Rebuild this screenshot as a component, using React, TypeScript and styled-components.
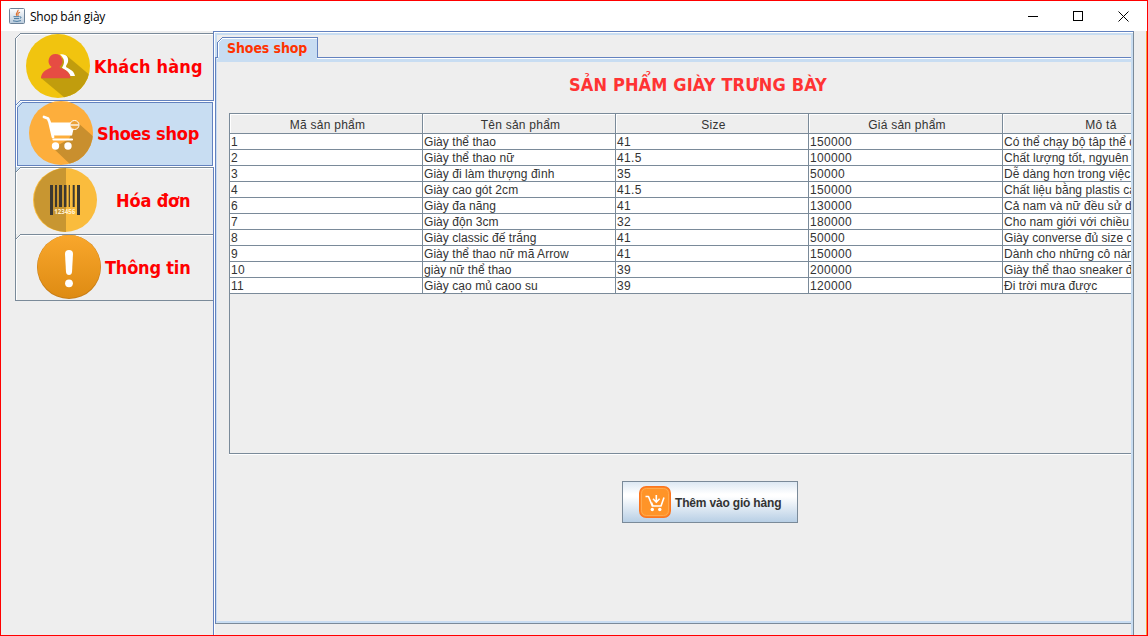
import React from 'react';
import styled, { createGlobalStyle } from 'styled-components';

const BLUE = '#6382bf';
const LIGHT = '#c8ddf2';
const SLATE = '#7a8a99';
const FACE = '#eeeeee';

const Global = createGlobalStyle`
  * { box-sizing: border-box; }
  body { margin: 0; background: ${FACE}; }
`;

const Frame = styled.div`
  width: 1148px;
  height: 636px;
  display: flex;
  flex-direction: column;
  border: 1px solid #ff0000;
  background: ${FACE};
  overflow: hidden;
  font-family: 'Liberation Sans', Arial, sans-serif;
  color: #333;
`;

const TitleBar = styled.header`
  height: 30px;
  flex: none;
  display: flex;
  align-items: center;
  padding-left: 8px;
  background: #fff;
`;

const WindowTitle = styled.div`
  flex: 1;
  padding-left: 5px;
  font: 12px 'Open Sans', 'Noto Sans', sans-serif;
  letter-spacing: -0.25px;
  color: #000;
`;

const WindowButton = styled.div`
  width: 45px;
  height: 28px;
  display: grid;
  place-items: center;
  &:last-child { width: 47px; }
`;

const Body = styled.div`
  flex: 1;
  display: flex;
  min-height: 0;
  border-right: 1px solid #f5a040;
`;

const SideTabs = styled.nav`
  width: 212px;
  flex: none;
  padding: 2px 0 0 14px;
`;

const SideTab = styled.div<{ $selected?: boolean; $inset: number }>`
  position: relative;
  height: 67px;
  display: flex;
  width: ${p => (p.$selected ? 199 : 198)}px;
  padding-left: ${p => p.$inset}px;
  border-left: 1px solid ${p => (p.$selected ? BLUE : SLATE)};
  border-top: 1px solid ${p => (p.$selected ? BLUE : SLATE)};
  box-shadow: inset 1px 1px #fff;
  background: ${p => (p.$selected ? LIGHT : FACE)};
  &:last-child { border-bottom: 1px solid ${SLATE}; }
`;

const FocusRing = styled.svg`
  position: absolute;
  left: 0;
  top: 0;
`;

const Corner = styled.svg`
  position: absolute;
  left: -1px;
  top: -1px;
`;

const SideIcon = styled.svg`
  position: relative;
  width: 64px;
  height: 64px;
  flex: none;
`;

const SideLabel = styled.span<{ $gap: number; $spacing: number }>`
  position: relative;
  padding-left: ${p => p.$gap}px;
  line-height: 66px;
  letter-spacing: ${p => p.$spacing}px;
  font-family: 'DejaVu Sans Condensed', 'DejaVu Sans', sans-serif;
  font-stretch: condensed;
  font-weight: bold;
  font-size: 18px;
  white-space: nowrap;
  color: #ff0000;
`;

const Content = styled.main`
  width: 921px;
  flex: none;
  border: 1px solid ${BLUE};
  border-right-color: ${SLATE};
  border-bottom: 0;
`;

const ContentInset = styled.div`
  height: 100%;
  border-top: 1px solid #fff;
  border-left: 1px solid #fff;
`;

const ContentFill = styled.div`
  height: 100%;
  border-top: 2px solid ${LIGHT};
  border-right: 2px solid ${LIGHT};
`;

const TabStrip = styled.div`
  height: 22px;
  padding-top: 2px;
  border-left: 2px solid ${LIGHT};
`;

const InnerTab = styled.div`
  position: relative;
  width: 101px;
  height: 21px;
  padding-left: 9px;
  border: 1px solid ${BLUE};
  border-bottom: 0;
  background: ${LIGHT};
  box-shadow: inset 1px 1px #fff;
  font-family: 'DejaVu Sans Condensed', 'DejaVu Sans', sans-serif;
  font-stretch: condensed;
  font-weight: bold;
  font-size: 14px;
  letter-spacing: -0.1px;
  line-height: 20px;
  color: #ff3300;
  white-space: nowrap;
  &::after {
    content: '';
    position: absolute;
    left: 0;
    right: 0;
    bottom: -3px;
    height: 4px;
    background: ${LIGHT};
  }
`;

const ShopPanel = styled.section`
  height: 567px;
  border-top: 1px solid ${BLUE};
  border-left: 1px solid ${BLUE};
  border-bottom: 1px solid ${SLATE};
`;

const ShopFill = styled.div`
  height: 100%;
  display: flex;
  flex-direction: column;
  border-left: 1px solid ${LIGHT};
  border-bottom: 2px solid ${LIGHT};
  padding-left: 12px;
  overflow: hidden;
  &::before {
    content: '';
    flex: none;
    height: 3px;
    margin-left: -12px;
    border-top: 1px solid #fff;
    background: ${LIGHT};
  }
`;

const Heading = styled.h1`
  flex: none;
  height: 52px;
  margin: 0 0 -1px;
  padding-left: 340px;
  font-family: 'DejaVu Sans Condensed', 'DejaVu Sans', sans-serif;
  font-stretch: condensed;
  font-weight: bold;
  font-size: 18px;
  letter-spacing: 0.13px;
  line-height: 45px;
  white-space: nowrap;
  color: #ff3333;
`;

const ScrollPane = styled.div`
  flex: none;
  height: 341px;
  border: 1px solid ${SLATE};
  border-right: 0;
  overflow: hidden;
  box-shadow: 0 1px #fff;
`;

const Row = styled.div`
  display: grid;
  grid-template-columns: 193px 193px 193px 194px 194px;
  width: 967px;
`;

const HeaderCell = styled.div`
  height: 20px;
  padding-left: 3px;
  border-right: 1px solid ${SLATE};
  border-bottom: 1px solid ${SLATE};
  box-shadow: inset 1px 1px #fff;
  font-size: 12px;
  letter-spacing: 0.25px;
  line-height: 22px;
  text-align: center;
  white-space: nowrap;
`;

const Cell = styled.div<{ $numeric?: boolean }>`
  height: 16px;
  padding-left: 1px;
  border-right: 1px solid ${SLATE};
  border-bottom: 1px solid ${SLATE};
  background: #fff;
  font-size: 12px;
  letter-spacing: ${p => (p.$numeric ? 0.33 : 0.05)}px;
  line-height: 16px;
  white-space: nowrap;
`;

const AddButton = styled.button`
  flex: none;
  width: 176px;
  height: 42px;
  margin: 27px 0 0 393px;
  padding: 0 0 0 16px;
  display: flex;
  align-items: center;
  gap: 4px;
  border: 1px solid ${SLATE};
  background: linear-gradient(#dde8f3 0%, #ffffff 30%, #ffffff 36%, #b8cfe5 100%);
  font: bold 12px 'Liberation Sans', Arial, sans-serif;
  letter-spacing: -0.18px;
  color: #333;
  white-space: nowrap;
`;

const ButtonText = styled.span`
  padding-top: 2px;
`;

const headers = ['Mã sản phẩm', 'Tên sản phẩm', 'Size', 'Giá sản phẩm', 'Mô tả'];
const products = [
  ['1', 'Giày thể thao', '41', '150000', 'Có thể chạy bộ tâp thể dục'],
  ['2', 'Giày thể thao nữ', '41.5', '100000', 'Chất lượng tốt, ngyuên bản'],
  ['3', 'Giày đi làm thượng đình', '35', '50000', 'Dễ dàng hơn trong việc đi'],
  ['4', 'Giày cao gót 2cm', '41.5', '150000', 'Chất liệu bằng plastis cao'],
  ['6', 'Giày đa năng', '41', '130000', 'Cả nam và nữ đều sử dụng'],
  ['7', 'Giày độn 3cm', '32', '180000', 'Cho nam giới với chiều cao'],
  ['8', 'Giày classic đế trắng', '41', '50000', 'Giày converse đủ size cho'],
  ['9', 'Giày thể thao nữ mã Arrow', '41', '150000', 'Dành cho những cô nàng'],
  ['10', 'giày nữ thể thao', '39', '200000', 'Giày thể thao sneaker đẹp'],
  ['11', 'Giày cạo mủ caoo su', '39', '120000', 'Đi trời mưa được'],
];

const JavaIcon = () => (
  <svg width="16" height="16" viewBox="0 0 16 16">
    <defs>
      <linearGradient id="java" x2="0" y2="1">
        <stop stopColor="#fff" />
        <stop offset="1" stopColor="#b9cbdc" />
      </linearGradient>
    </defs>
    <rect x=".5" y=".5" width="15" height="15" rx="1" fill="url(#java)" stroke="#6c8298" />
    <path d="M9 1.8C10 3.5 6 4.5 7.7 7.8M11 4.2C8.5 5.2 8.6 6 9.2 8" fill="none" stroke="#dc7030" strokeWidth="1.1" />
    <path d="M4.5 8.7h6M5 10.6h5M4 12.8q4 1.3 8-.2M10.8 8.7q2.6.1.2 2" fill="none" stroke="#48799f" strokeWidth="1" />
  </svg>
);

const CustomerIcon = () => (
  <SideIcon viewBox="0 0 64 64">
    <defs><clipPath id="disc"><circle cx="32" cy="32" r="32" /></clipPath></defs>
    <circle cx="32" cy="32" r="32" fill="#f1c40f" />
    <path clipPath="url(#disc)" d="M40 21 65 42V64H39L15 44Z" fill="#c19d0d" />
    <path d="M34 20.500c6-1 9 3 8 7.500-.5 2-2 3-2 4.500 0 2 8 2.500 9 9.500h-4.500c-2-6-7.500-6.500-8.500-8.500 3-4 3-9-2-13Z" fill="#fff" />
    <path d="M29.500 20a7 7 0 0 1 4 12.700c0 2 10 2 11 11.500H15c1-9.500 10.500-9.500 10.500-11.500a7 7 0 0 1 4-12.700Z" fill="#e64c43" />
  </SideIcon>
);

const CartIcon = () => (
  <SideIcon viewBox="0 0 64 64">
    <circle cx="32" cy="32" r="32" fill="#fdae3c" />
    <path clipPath="url(#disc)" d="M48 21 66 37V66H44L24 47 40 38Z" fill="#c98f2e" />
    <path d="M15 16 19 17.500 20.500 21 24 36" fill="none" stroke="#fff" strokeWidth="2.800" strokeLinecap="round" strokeLinejoin="round" />
    <path d="M20 21.500H46L43 34.500H24Z" fill="#fff" />
    <path d="M24.500 38.500H43" stroke="#fff" strokeWidth="2.200" strokeLinecap="round" />
    <circle cx="26.500" cy="45" r="3.700" fill="#fff" />
    <circle cx="39" cy="45" r="3.700" fill="#fff" />
    <circle cx="45.500" cy="24" r="4.500" fill="#eaa23a" stroke="#fff" />
    <path d="M41.500 24h8" stroke="#fff" strokeWidth="1.300" />
  </SideIcon>
);

const bars = [[17, 3], [22, 2], [26, 3], [31, 2.5], [35.7, 1.2], [39.7, 2], [44, 3]];
const BarcodeIcon = () => (
  <SideIcon viewBox="0 0 64 64">
    <circle cx="32" cy="32" r="32" fill="#fabc3d" />
    <path d="M33 0A32 32 0 1 0 33 64Z" fill="#c89631" />
    {bars.map(([x, w], i) => (
      <rect key={x} x={x} y="17" width={w} height={i === 0 || i === 6 ? 30 : 22} fill="#3c3830" />
    ))}
    <text x="21.300" y="46.300" fontSize="7" fontWeight="bold" textLength="21" lengthAdjust="spacingAndGlyphs" fontFamily="Open Sans, sans-serif" fill="#fff0d0">123456</text>
  </SideIcon>
);

const InfoIcon = () => (
  <SideIcon viewBox="0 0 64 64">
    <defs>
      <linearGradient id="info" x2="0" y2="1">
        <stop stopColor="#f9a72c" />
        <stop offset="1" stopColor="#de8b13" />
      </linearGradient>
    </defs>
    <circle cx="32" cy="32" r="32" fill="#c87d15" />
    <circle cx="32" cy="31.500" r="31.500" fill="url(#info)" />
    <path d="M28 19q0-4 4-4t4 4l-1 18q-.3 3-3 3t-3-3Z" fill="#fff" />
    <circle cx="32" cy="48.300" r="3.900" fill="#fff" />
  </SideIcon>
);

const AddCartIcon = () => (
  <svg width="32" height="32" viewBox="0 0 32 32">
    <rect x=".7" y=".7" width="30.600" height="30.600" rx="6.500" fill="#ff9428" stroke="#fb7520" strokeWidth="1.400" />
    <rect x="2.500" y="2.500" width="27" height="27" rx="5" fill="none" stroke="#ffa94d" />
    <path d="M6.500 10.500h3l3.800 9.500h8.700l3-8.500M12.500 16.500 14 20" fill="none" stroke="#fff" strokeWidth="1.600" strokeLinejoin="round" />
    <path d="M17.300 9v6.500M14 12.800l3.300 3.400 3.300-3.400" fill="none" stroke="#fff" strokeWidth="1.600" />
    <circle cx="13.300" cy="23.500" r="1.700" fill="#fff" />
    <circle cx="20.800" cy="23.500" r="1.700" fill="#fff" />
  </svg>
);

type CornerProps = { color: string; fill: string; back?: string; edge?: string };

const TabCorner = ({ color, fill, back = FACE, edge }: CornerProps) => (
  <Corner width="7" height="7" shapeRendering="crispEdges">
    <path d="M0 0H7V7H0Z" fill={fill} />
    <path d="M0 0H5L0 5Z" fill={back} />
    <path d="M5 0h2v1h-2ZM4 1h1v1h-1ZM3 2h1v1h-1ZM2 3h1v1h-1ZM1 4h1v1h-1ZM0 5h1v2h-1Z" fill={color} />
    <path d="M5 1h2v1h-2ZM4 2h1v1h-1ZM3 3h1v1h-1ZM2 4h1v1h-1ZM1 5h1v2h-1Z" fill="#fff" />
    {edge && <path d="M0 0h1v6h-1Z" fill={edge} />}
  </Corner>
);

export default function App() {
  return (
    <Frame>
      <Global />
      <TitleBar>
        <JavaIcon />
        <WindowTitle>Shop bán giày</WindowTitle>
        <WindowButton><svg width="10" height="10"><path d="M0 5.500H10" stroke="#000" /></svg></WindowButton>
        <WindowButton><svg width="10" height="10"><rect x=".5" y=".5" width="9" height="9" fill="none" stroke="#000" /></svg></WindowButton>
        <WindowButton><svg width="11" height="11"><path d="M.5.5l10 10M10.500.5l-10 10" stroke="#000" /></svg></WindowButton>
      </TitleBar>
      <Body>
        <SideTabs>
          <SideTab $inset={10}>
            <TabCorner color={SLATE} fill={FACE} />
            <CustomerIcon />
            <SideLabel $gap={4} $spacing={0.13}>Khách hàng</SideLabel>
          </SideTab>
          <SideTab $inset={13} $selected>
            <TabCorner color={BLUE} fill={LIGHT} edge={BLUE} />
            <FocusRing width="198" height="66" shapeRendering="crispEdges">
              <path d="M1.500 64.500V6.500L6.500 1.500H196.500V64.500Z" fill="none" stroke={BLUE} />
              <path d="M197.500 0V66M0 65.500H198" stroke="#fff" />
            </FocusRing>
            <CartIcon />
            <SideLabel $gap={4} $spacing={-0.25}>Shoes shop</SideLabel>
          </SideTab>
          <SideTab $inset={17}>
            <TabCorner color={SLATE} fill={FACE} back={LIGHT} edge={SLATE} />
            <BarcodeIcon />
            <SideLabel $gap={19} $spacing={-0.15}>Hóa đơn</SideLabel>
          </SideTab>
          <SideTab $inset={21}>
            <TabCorner color={SLATE} fill={FACE} edge={SLATE} />
            <InfoIcon />
            <SideLabel $gap={4} $spacing={-0.2}>Thông tin</SideLabel>
          </SideTab>
        </SideTabs>
        <Content>
          <ContentInset>
            <ContentFill>
              <TabStrip>
                <InnerTab>
                  <TabCorner color={BLUE} fill={LIGHT} />
                  Shoes shop
                </InnerTab>
              </TabStrip>
              <ShopPanel>
                <ShopFill>
                  <Heading>SẢN PHẨM GIÀY TRƯNG BÀY</Heading>
                  <ScrollPane>
                    <Row>{headers.map(h => <HeaderCell key={h}>{h}</HeaderCell>)}</Row>
                    {products.map(p => (
                      <Row key={p[0]}>
                        {p.map((v, i) => <Cell key={i} $numeric={i !== 1 && i !== 4}>{v}</Cell>)}
                      </Row>
                    ))}
                  </ScrollPane>
                  <AddButton><AddCartIcon /><ButtonText>Thêm vào giỏ hàng</ButtonText></AddButton>
                </ShopFill>
              </ShopPanel>
            </ContentFill>
          </ContentInset>
        </Content>
      </Body>
    </Frame>
  );
}
